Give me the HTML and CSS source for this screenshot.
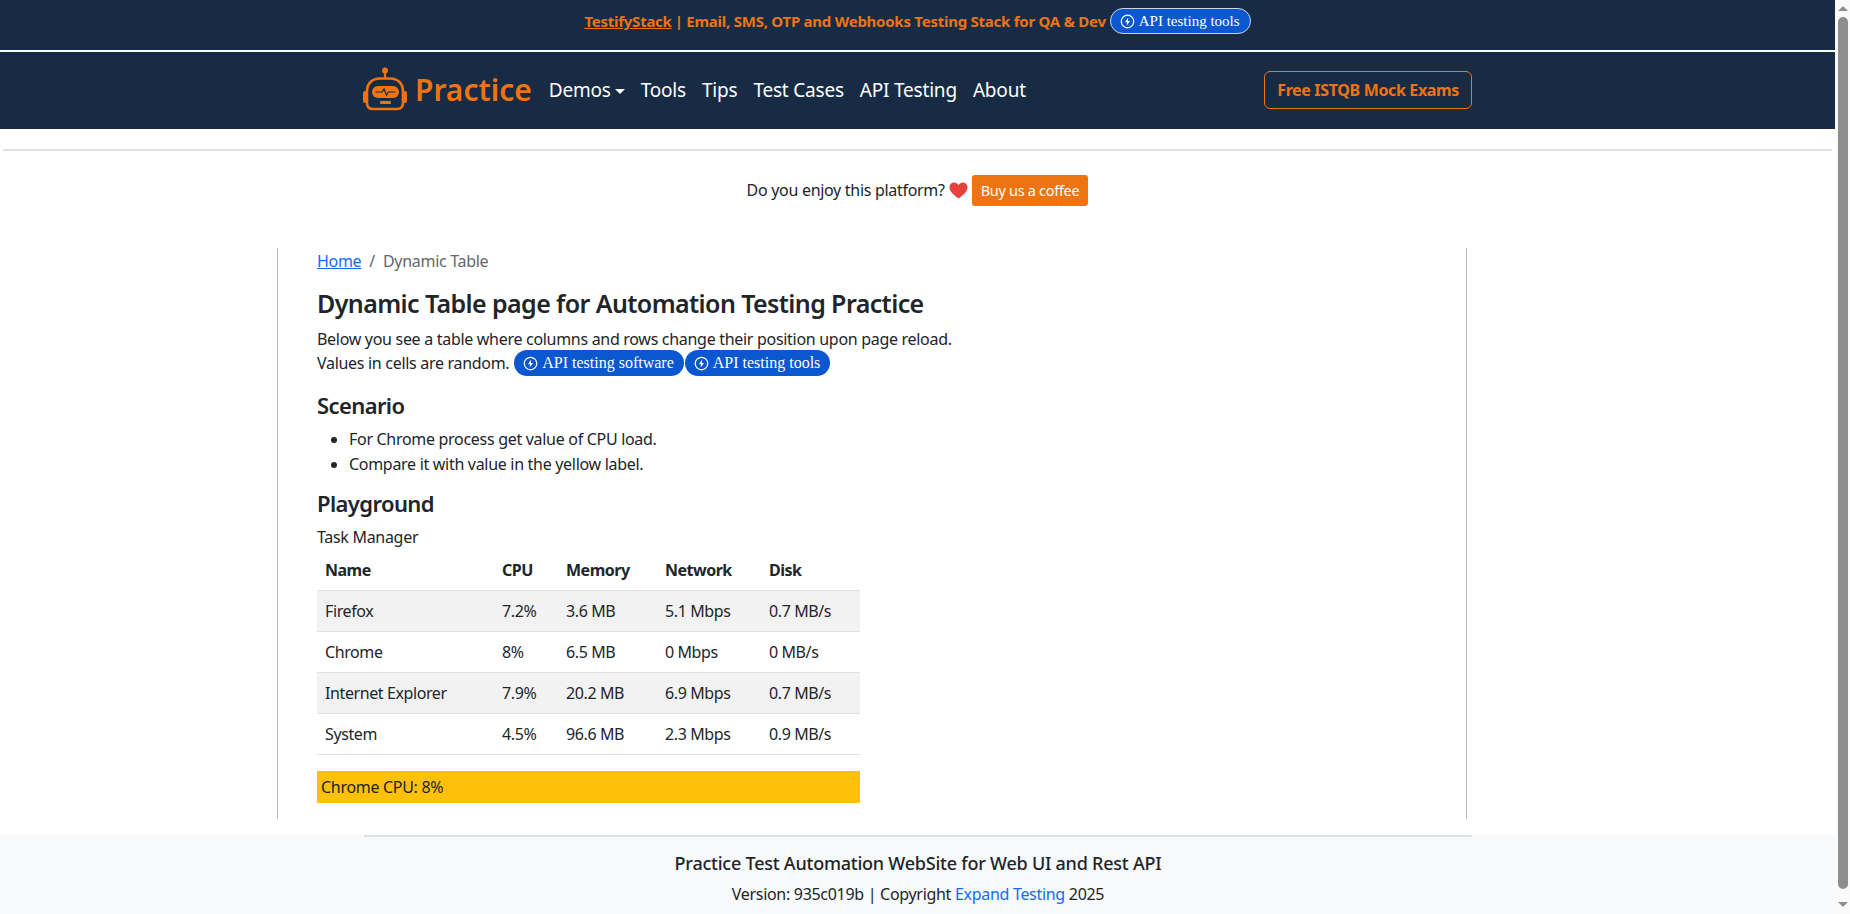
FILE: index.html
```html
<!DOCTYPE html>
<html lang="en">
<head>
    <meta charset="UTF-8">
    <meta name="viewport" content="width=device-width, initial-scale=1.0">
    <title>Dynamic Table page for Automation Testing Practice</title>
    <link rel="stylesheet" href="styles.css">
</head>
<body>
    <div class="promo">
        <a class="promo-link" href="#">TestifyStack</a>
        <span class="promo-text">| Email, SMS, OTP and Webhooks Testing Stack for QA &amp; Dev</span>
        <a class="ad-pill ad-pill-outline" href="#">
            <svg class="bolt" viewBox="0 0 24 24"><circle cx="12" cy="12" r="10" fill="none" stroke="#fff" stroke-width="2"/><path d="M13 5.500 8 13h3.200l-.4 5.500 5.200-7.500h-3.200z" fill="#fff"/></svg>
            API testing tools
        </a>
    </div>
    <header class="navbar">
        <div class="nav-inner">
            <a class="brand" href="#">
                <svg class="robot" viewBox="0 0 44 46">
                    <circle cx="22" cy="3.500" r="3" fill="#ee7411"/>
                    <path d="M22 5v7" stroke="#ee7411" stroke-width="2.200" fill="none"/>
                    <path d="M17 11.500h10c8 0 13 5 13 13V36c0 4-2 6-6 6H10c-4 0-6-2-6-6V24.500c0-8 5-13 13-13z" fill="none" stroke="#ee7411" stroke-width="2.600"/>
                    <rect x="0" y="24" width="4" height="12" rx="2" fill="#ee7411"/>
                    <rect x="40" y="24" width="4" height="12" rx="2" fill="#ee7411"/>
                    <rect x="9" y="19" width="27" height="12" rx="6" fill="#ee7411"/>
                    <path d="M12.500 25h6.500l2-3 2.500 6 2-3h7" stroke="#182b45" stroke-width="1.200" fill="none"/>
                    <rect x="17" y="34" width="11" height="3" rx="1" fill="#ee7411"/>
                </svg>
                <span class="brand-name">Practice</span>
            </a>
            <nav class="nav-links">
                <a href="#">Demos<span class="caret"></span></a>
                <a href="#">Tools</a>
                <a href="#">Tips</a>
                <a href="#">Test Cases</a>
                <a href="#">API Testing</a>
                <a href="#">About</a>
            </nav>
            <a class="exam-btn" href="#">Free ISTQB Mock Exams</a>
        </div>
    </header>
    <hr class="page-rule">
    <div class="coffee">
        <span class="coffee-text">Do you enjoy this platform?</span>
        <svg class="heart" viewBox="0 0 20 18"><path d="M10 17.500C3.500 12.500.5 9.500.5 5.500.5 2.500 2.800.5 5.400.5 7.300.5 9 1.500 10 3.200 11 1.500 12.700.5 14.600.5c2.600 0 4.900 2 4.900 5 0 4-3 7-9.500 12z" fill="#e8403c"/></svg>
        <a class="coffee-btn" href="#">Buy us a coffee</a>
    </div>
    <main class="content">
        <div class="crumbs">
            <a href="#">Home</a>
            <span class="crumb-sep">/</span>
            <span class="crumb-current">Dynamic Table</span>
        </div>
        <h1>Dynamic Table page for Automation Testing Practice</h1>
        <p class="intro">Below you see a table where columns and rows change their position upon page reload.<br>
            Values in cells are random.
            <a class="ad-pill ad-pill-large" href="#">
                <svg class="bolt" viewBox="0 0 24 24"><circle cx="12" cy="12" r="10" fill="none" stroke="#fff" stroke-width="2"/><path d="M13 5.500 8 13h3.200l-.4 5.500 5.200-7.500h-3.200z" fill="#fff"/></svg>
                API testing software
            </a><a class="ad-pill ad-pill-large" href="#">
                <svg class="bolt" viewBox="0 0 24 24"><circle cx="12" cy="12" r="10" fill="none" stroke="#fff" stroke-width="2"/><path d="M13 5.500 8 13h3.200l-.4 5.500 5.200-7.500h-3.200z" fill="#fff"/></svg>
                API testing tools
            </a>
        </p>
        <h2 class="scenario-title">Scenario</h2>
        <ul class="scenario">
            <li>For Chrome process get value of CPU load.</li>
            <li>Compare it with value in the yellow label.</li>
        </ul>
        <h2 class="playground-title">Playground</h2>
        <table class="tasks">
            <caption>Task Manager</caption>
            <thead>
                <tr><th class="col-name">Name</th><th class="col-cpu">CPU</th><th class="col-mem">Memory</th><th class="col-net">Network</th><th>Disk</th></tr>
            </thead>
            <tbody>
                <tr><td>Firefox</td><td>7.2%</td><td>3.6 MB</td><td>5.1 Mbps</td><td>0.7 MB/s</td></tr>
                <tr><td>Chrome</td><td>8%</td><td>6.5 MB</td><td>0 Mbps</td><td>0 MB/s</td></tr>
                <tr><td>Internet Explorer</td><td>7.9%</td><td>20.2 MB</td><td>6.9 Mbps</td><td>0.7 MB/s</td></tr>
                <tr><td>System</td><td>4.5%</td><td>96.6 MB</td><td>2.3 Mbps</td><td>0.9 MB/s</td></tr>
            </tbody>
        </table>
        <p class="cpu-label">Chrome CPU: 8%</p>
    </main>
    <footer class="footer">
        <div class="footer-inner">
            <p class="footer-title">Practice Test Automation WebSite for Web UI and Rest API</p>
            <p class="footer-meta">Version: 935c019b | Copyright <a href="#">Expand Testing</a> 2025</p>
        </div>
    </footer>
    <div class="scrollbar">
        <span class="scroll-up"></span>
        <span class="scroll-thumb"></span>
        <span class="scroll-down"></span>
    </div>
</body>
</html>
```

FILE: styles.css
```css
body {
    margin: 0 15px 0 0;
    font-family: "Noto Sans", sans-serif;
    font-size: 16px;
    line-height: 24px;
    letter-spacing: -0.3px;
    color: #212529;
    background-color: #fff;
}
a {
    color: #0d6efd;
}
.scrollbar {
    position: fixed;
    top: 0;
    right: 0;
    bottom: 0;
    width: 15px;
    display: flex;
    flex-direction: column;
    align-items: center;
    background-color: #fafafa;
}
.scroll-up {
    margin-top: 6px;
    border-bottom: 5px solid #8e8e8e;
    border-left: 5px solid transparent;
    border-right: 5px solid transparent;
}
.scroll-thumb {
    width: 10px;
    height: 872px;
    margin: 6px 0 13px;
    background-color: #8e8e8e;
    border-radius: 5px;
}
.scroll-down {
    border-top: 5px solid #8e8e8e;
    border-left: 5px solid transparent;
    border-right: 5px solid transparent;
}
.promo {
    height: 42px;
    padding-bottom: 8px;
    display: flex;
    justify-content: center;
    align-items: center;
    gap: 3px;
    background-color: #182b45;
    color: #ee7411;
    font-size: 15px;
    font-weight: 700;
    letter-spacing: -0.25px;
    border-bottom: 2px solid #fff;
}
.promo-link {
    color: #ee7411;
}
.ad-pill {
    display: inline-flex;
    align-items: center;
    gap: 4px;
    height: 26px;
    box-sizing: border-box;
    padding: 0 10px 0 9px;
    background-color: #0b57d0;
    border-radius: 14px;
    color: #fff;
    text-decoration: none;
    font-family: "Liberation Serif", serif;
    font-size: 15px;
    font-weight: 400;
    letter-spacing: 0;
    vertical-align: middle;
}
.ad-pill-outline {
    border: 1px solid #ccd5e3;
    margin-left: 1px;
}
.ad-pill-large {
    font-size: 16px;
    margin: -4px 0 -1px 1px;
}
.bolt {
    width: 15px;
    height: 15px;
}
.navbar {
    height: 75px;
    padding-bottom: 2px;
    background-color: #182b45;
}
.nav-inner {
    width: 1109px;
    height: 100%;
    margin-left: 363px;
    display: flex;
    align-items: center;
}
.brand {
    display: flex;
    align-items: center;
    gap: 8px;
    text-decoration: none;
}
.robot {
    width: 44px;
    height: 46px;
}
.brand-name {
    color: #ee7411;
    font-size: 30px;
    font-weight: 600;
    letter-spacing: 0;
}
.nav-links {
    display: flex;
    gap: 16px;
    margin-left: 17px;
}
.nav-links a {
    color: #fff;
    font-size: 19px;
    letter-spacing: -0.2px;
    text-decoration: none;
}
.caret {
    display: inline-block;
    margin-left: 4px;
    vertical-align: 3px;
    border-top: 5px solid #fff;
    border-left: 5px solid transparent;
    border-right: 5px solid transparent;
}
.exam-btn {
    margin-left: auto;
    padding: 6px 12px;
    border: 1px solid #ee7411;
    border-radius: 6px;
    color: #ee7411;
    font-weight: 700;
    letter-spacing: -0.35px;
    text-decoration: none;
}
.page-rule {
    margin: 20px 3px 0;
    border: 0;
    border-top: 2px solid #dee2e6;
}
.coffee {
    display: flex;
    justify-content: center;
    align-items: center;
    margin-top: 24px;
    gap: 4px;
}
.coffee-text {
    margin-top: -2px;
}
.heart {
    width: 19px;
    height: 17px;
}
.coffee-btn {
    padding: 3px 9px 4px;
    background-color: #ee7411;
    border-radius: 3px;
    color: #fff;
    font-size: 14.5px;
    text-decoration: none;
}
.content {
    width: 1149px;
    margin: 42px 0 16px 277px;
    padding: 0 0 16px 39px;
    border-left: 1px solid #bbb;
    border-right: 1px solid #bbb;
}
.crumbs {
    display: flex;
    gap: 8px;
    padding-top: 1px;
}
.crumb-current,
.crumb-sep {
    color: #5f6770;
}
h1 {
    margin: 15px 0 9px;
    font-size: 25px;
    line-height: 30px;
    font-weight: 600;
    letter-spacing: -0.6px;
}
.intro {
    margin: 0 0 16px;
}
h2 {
    margin: 0 0 8px;
    font-weight: 600;
    line-height: 28px;
}
.scenario-title,
.playground-title {
    font-size: 22px;
    letter-spacing: -0.6px;
}
.scenario {
    margin: 0 0 13px;
    padding-left: 32px;
    line-height: 24.5px;
}
.tasks {
    width: 543px;
    table-layout: fixed;
    border-collapse: collapse;
    caption-side: top;
}
.tasks caption {
    text-align: left;
    padding: 0 0 1px;
}
.tasks th,
.tasks td {
    padding: 8px;
    text-align: left;
    border-bottom: 1px solid #dee2e6;
}
.tasks th {
    font-weight: 700;
    letter-spacing: -0.5px;
}
.tasks td {
    letter-spacing: -0.4px;
}
.tasks tbody tr:nth-child(odd) {
    background-color: #f2f2f2;
}
.col-name {
    width: 161px;
}
.col-cpu {
    width: 48px;
}
.col-mem {
    width: 83px;
}
.col-net {
    width: 88px;
}
.cpu-label {
    width: 535px;
    margin: 16px 0 0;
    padding: 4px;
    background-color: #ffc107;
}
.footer {
    height: 92px;
    background-color: #f8f9fa;
}
.footer-inner {
    width: 1108px;
    margin-left: 364px;
    border-top: 2px solid #dee2e6;
    padding-top: 14px;
    text-align: center;
}
.footer-inner p {
    margin: 0;
}
.footer-title {
    font-size: 18px;
    font-weight: 500;
    letter-spacing: -0.23px;
    margin-bottom: 7px !important;
}
.footer-meta a {
    text-decoration: none;
}
```
